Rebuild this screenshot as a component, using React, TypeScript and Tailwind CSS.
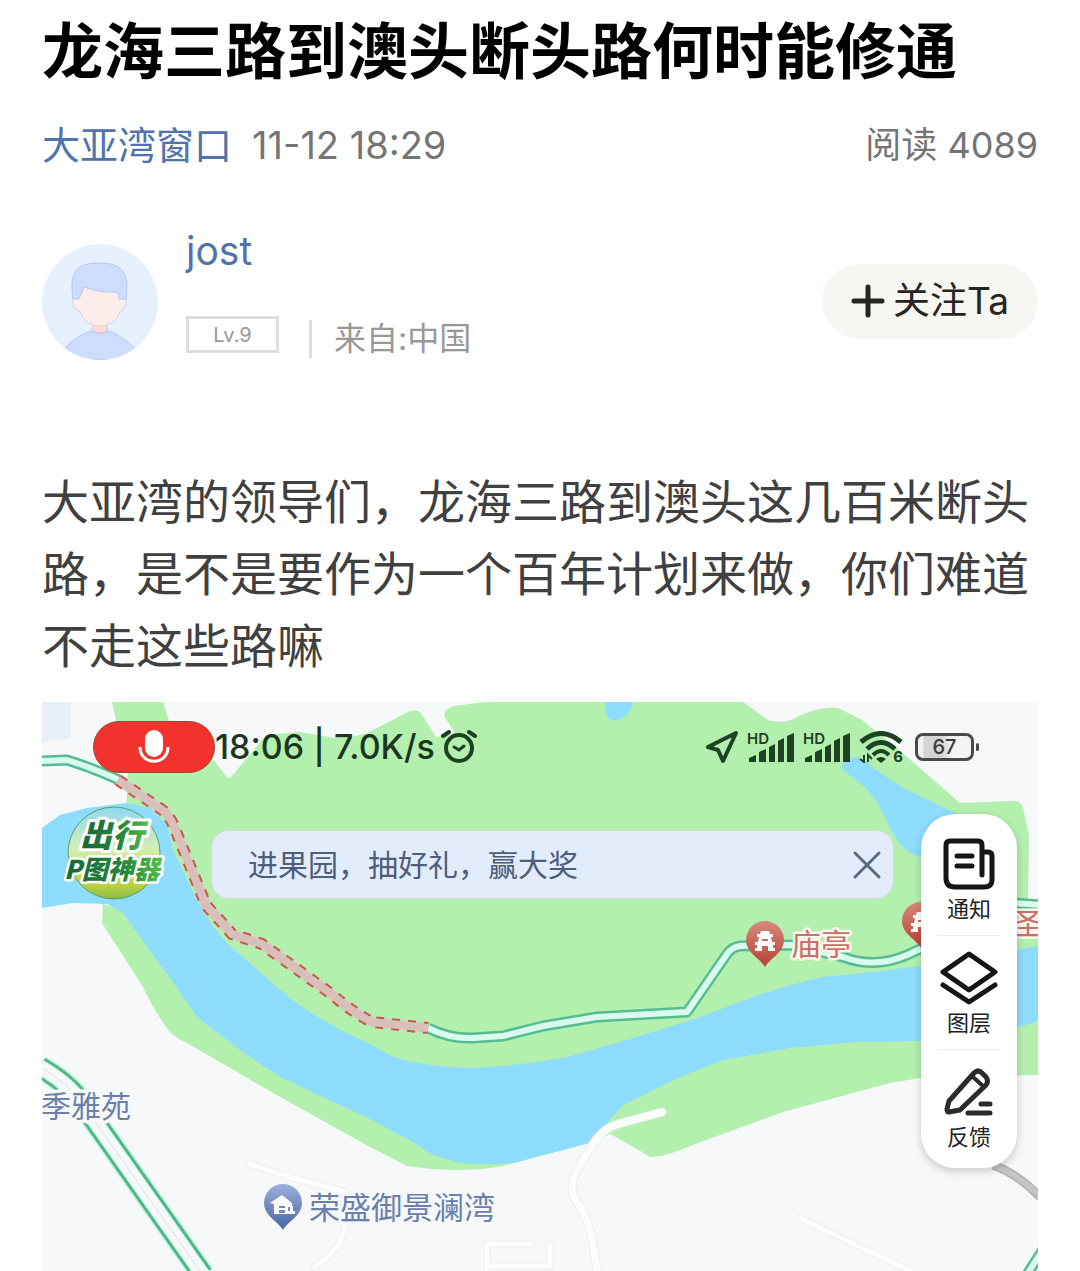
import React from "react";

const WATER =
  "M42 828 L60 815 L87 808 L126 803 L150 808 L167 825 L173 850 L197 900 Q210 925 227 943 L270 981 Q290 999 307 1010 Q340 1031 370 1044 L393 1057 Q430 1068 473 1068 Q520 1066 567 1057 L627 1040 L700 1017 L750 998 Q790 984 823 977 L873 972 L920 966 L1038 946 L1038 1021 Q980 1040 920 1041 L857 1042 L790 1048 L723 1060 L680 1077 L623 1105 L607 1123 L593 1142 L513 1163 Q480 1166 457 1162 L432 1155 L413 1142 L370 1119 L280 1077 L240 1050 L197 1017 L177 988 L123 913 L107 904 L73 903 L42 908 Z";

const UPPER_LAND =
  "M112 702 L163 702 L172 730 L215 762 L227 777 Q229 779 231 777 L258 745 L266 735 L300 732 L335 738 L352 737 L367 733 L408 712 Q416 708 421 713 L436 737 L455 733 L445 718 Q442 710 454 706 L485 702 L743 702 L768 720 Q784 725 799 716 Q820 706 838 708 L862 720 L905 755 L960 803 L1012 801 Q1021 800 1023 808 L1029 835 L1028 900 L1038 903 L1038 960 L920 980 L823 990 L700 1030 L567 1070 L473 1080 L370 1055 L227 960 L165 840 L126 815 L128 773 Z";

const LOWER_LAND =
  "M103 904 L102 923 L143 987 Q160 1022 173 1035 Q180 1040 187 1043 L273 1093 L370 1147 L407 1166 Q460 1174 503 1166 L593 1142 L610 1134 L637 1149 L650 1157 Q665 1157 690 1146 L783 1112 L890 1083 L920 1078 L1038 1075 L1038 1000 L700 1040 L480 1090 L290 1040 L160 920 Z";

const BLOCKED_ROAD =
  "M118 780 L158 807 Q169 813 175 829 L206 905 L232 934 L262 944 L330 993 Q355 1014 372 1022 L428 1028";
const RIVER_ROAD =
  "M428 1028 Q450 1039 473 1038 L503 1036 L543 1026 L597 1017 L687 1012 L727 954 Q732 947 740 946 L790 945 L843 957 Q875 969 907 955 L940 940";

function TrafficRoad({ d, width = 11 }: { d: string; width?: number }) {
  return (
    <g fill="none" strokeLinejoin="round">
      <path d={d} stroke="#55bd93" strokeWidth={width} />
      <path d={d} stroke="#d9fbed" strokeWidth={width - 5} />
    </g>
  );
}

function Lane({ d, width = 7 }: { d: string; width?: number }) {
  return (
    <g fill="none" strokeLinejoin="round" strokeLinecap="round">
      <path d={d} stroke="#eceef0" strokeWidth={width + 2} />
      <path d={d} stroke="#fdfdfe" strokeWidth={width} />
    </g>
  );
}

function Pin({ x, y, fill, children }: { x: number; y: number; fill: string; children: React.ReactNode }) {
  return (
    <g transform={`translate(${x} ${y})`}>
      <path d="M0 23 C-4 15 -19 9 -19 -4 A19 19 0 0 1 19 -4 C19 9 4 15 0 23Z" fill={fill} />
      {children}
    </g>
  );
}

function Pavilion() {
  return (
    <path
      d="M-4 -13 H4 L5 -10 H8 V-7 H-8 V-10 H-5Z M-6 -7 H6 L7 -2 H10 V1 H8 V4 H10 V7 H3 V2 H-3 V7 H-10 V4 H-8 V1 H-10 V-2 H-7Z M-3 -5 V-3 H3 V-5Z"
      fill="#fff"
      fillRule="evenodd"
    />
  );
}

function MapCanvas() {
  return (
    <svg
      className="absolute inset-0 h-full w-full font-['Noto_Sans_CJK_SC',sans-serif]"
      viewBox="42 702 996 569"
      preserveAspectRatio="xMidYMin slice"
      aria-label="地图"
    >
      <defs>
        <linearGradient id="redPin" x1="0" y1="0" x2="0" y2="1">
          <stop offset="0" stopColor="#d58a7c" />
          <stop offset="1" stopColor="#b93f37" />
        </linearGradient>
        <linearGradient id="bluePin" x1="0" y1="0" x2="0" y2="1">
          <stop offset="0" stopColor="#9cb2dc" />
          <stop offset="1" stopColor="#4765a2" />
        </linearGradient>
        <linearGradient id="badgeFill" x1="0" y1="0" x2="0" y2="1">
          <stop offset="0" stopColor="#93d8f0" />
          <stop offset="0.45" stopColor="#d3efb5" />
          <stop offset="0.8" stopColor="#c9d744" />
          <stop offset="1" stopColor="#8dbb45" />
        </linearGradient>
        <linearGradient id="badgeText" x1="0" y1="0" x2="1" y2="0">
          <stop offset="0" stopColor="#17663a" />
          <stop offset="0.6" stopColor="#25863a" />
          <stop offset="1" stopColor="#57c04a" />
        </linearGradient>
      </defs>
      <rect x="42" y="702" width="996" height="569" fill="#f6f8fa" />
      <path d="M42 702 H71 V738 L42 742Z" fill="#e9eff6" />
      <path d={LOWER_LAND} fill="#b3f0ae" />
      <path d={UPPER_LAND} fill="#b3f0ae" />
      <path d={WATER} fill="#8edcfe" />
      <path d="M605 702 L606 714 Q608 721 617 720 Q629 718 633 702Z" fill="#8edcfe" />
      <path d="M850 758 Q840 762 843 770 L866 788 L878 804 L893 833 Q903 852 920 857 L960 870 L960 815 L903 788 L872 767 Q862 755 850 758Z" fill="#8edcfe" />

      <Lane d="M250 1164 L290 1177 L345 1192 L345 1225 Q342 1250 314 1267" width={5} />
      <Lane d="M487 1271 L487 1244 L531 1244 M550 1244 L550 1266 L490 1266" width={5} />
      <Lane d="M800 1218 L860 1247 L911 1271" width={5} />
      <Lane d="M662 1112 L618 1124 Q604 1128 595 1141 L578 1168 Q568 1185 575 1199 Q590 1220 593 1245 L598 1275" width={7} />
      <path d="M993 1165 Q1018 1174 1040 1197" fill="none" stroke="#aeb0b3" strokeWidth="9" />
      <path d="M993 1165 Q1018 1174 1040 1197" fill="none" stroke="#c3c4c6" strokeWidth="6" />

      <g fill="none">
        <path d="M40 1067 Q68 1083 82 1103 L203 1275" stroke="#c3f6db" strokeWidth="24" />
        <path d="M40 1067 Q68 1083 82 1103 L203 1275" stroke="#4fb88b" strokeWidth="21" />
        <path d="M40 1067 Q68 1083 82 1103 L203 1275" stroke="#dcf8ea" strokeWidth="15" />
        <path d="M40 1067 Q68 1083 82 1103 L203 1275" stroke="#f6f9fa" strokeWidth="12" />
        <path d="M40 1067 Q68 1083 82 1103 L203 1275" stroke="#e3dfe3" strokeWidth="1" />
      </g>

      <TrafficRoad d="M40 761 L67 760 Q90 767 119 780" />
      <TrafficRoad d={RIVER_ROAD} />
      <TrafficRoad d="M1000 902 L1040 905" />
      <TrafficRoad d="M1024 1279 L1044 1248" />

      <g fill="none">
        <path d={BLOCKED_ROAD} stroke="#d9c9bd" strokeWidth="10" />
        <path d={BLOCKED_ROAD} stroke="#c8584b" strokeWidth="12" strokeDasharray="8 8" />
        <path d={BLOCKED_ROAD} stroke="#d9bfb9" strokeWidth="8" />
      </g>

      <Pin x={765} y={944} fill="url(#redPin)"><Pavilion /></Pin>
      <Pin x={921} y={925} fill="url(#redPin)"><Pavilion /></Pin>
      <Pin x={283} y={1207} fill="url(#bluePin)">
        <path d="M-13 -4 L-1 -12 L9 -4 V-1 H10 V4 H12 V7 H-9 V-3Z" fill="#fff" />
        <path d="M-4 -1 H2 V1 H-4Z M-4 3 H2 V6 H-4Z M5 0 H7 V4 H5Z" fill="#7189bd" />
      </Pin>

      <g strokeLinejoin="round" fontSize="30" style={{ paintOrder: "stroke" }}>
        <text x="791" y="955" fill="#cb6f68" stroke="#fbf6ee" strokeWidth="5">庙亭</text>
        <text x="1013" y="934" fill="#cb6f68" stroke="#fbf6ee" strokeWidth="5">圣</text>
        <text x="41" y="1117" fill="#6a80ab" stroke="#f6f8fa" strokeWidth="7">季雅苑</text>
        <text x="309" y="1219" fontSize="31" fill="#6a80ab" stroke="#f6f8fa" strokeWidth="5">荣盛御景澜湾</text>
      </g>

      <circle cx="114" cy="853" r="46" fill="url(#badgeFill)" stroke="#58a36c" strokeWidth="1" />
      <g
        fontWeight="900"
        fontStyle="italic"
        fill="url(#badgeText)"
        stroke="#fff"
        strokeLinejoin="round"
        style={{ paintOrder: "stroke" }}
      >
        <text x="80" y="847" fontSize="32" strokeWidth="6">出行</text>
        <text x="64" y="879" fontSize="26" strokeWidth="5">P图神器</text>
      </g>
    </svg>
  );
}

function Avatar() {
  return (
    <svg className="size-[116px] shrink-0 rounded-full" viewBox="0 0 116 116" aria-label="jost">
      <circle cx="58" cy="58" r="58" fill="#e6f0fe" />
      <path d="M20 108 Q30 94 49 87 Q58 92 67 87 Q84 94 96 108 L90 116 H26Z" fill="#cdddfd" stroke="#b4c9ee" strokeWidth="1" />
      <path d="M51 80 H65 V87 Q58 91 51 87Z" fill="#fddcd8" stroke="#dcc6d4" strokeWidth="1" />
      <path d="M31 54 Q29 64 38 68 Q43 82 58 82 Q73 82 78 68 Q86 64 84 54 L78 40 H38Z" fill="#feecea" stroke="#d5d1e6" strokeWidth="1" />
      <path d="M31 55 C27 28 34 19 57 19 C80 19 88 28 84 55 L77 55 L76 48 Q57 49 42 43 L37 55Z" fill="#cdddfd" stroke="#b4c9ee" strokeWidth="1" />
    </svg>
  );
}

function SignalBars() {
  return (
    <span className="relative block h-8 w-12">
      <svg className="absolute inset-0 h-full w-full" viewBox="0 0 48 32" fill="#1d4123" aria-hidden="true">
        <path d="M2 31 V27 L9 24 V31Z M12 31 V21 L19 18 V31Z M22 31 V16 L28 13 V31Z M31 31 V10 L37 7 V31Z M40 31 V5 L47 2 V31Z" />
      </svg>
      <span className="absolute top-0 left-0 text-[15px] leading-[15px] font-semibold">HD</span>
    </span>
  );
}

function StatusBar() {
  return (
    <div className="flex h-[90px] items-center justify-between pr-[59px] pl-[51px] text-[#1d4123]">
      <div className="flex items-center">
        <span className="flex h-[52px] w-[122px] items-center justify-center rounded-full border border-[#9c4a34] bg-[#f2322c]">
          <svg className="size-9" viewBox="0 0 36 36" aria-label="录音中">
            <rect x="9" y="1" width="18" height="27" rx="9" fill="#fff" />
            <path d="M4 18 C4 37 32 37 32 18" fill="none" stroke="#fff" strokeWidth="3" />
          </svg>
        </span>
        <span className="text-[34px] leading-10 font-medium whitespace-pre text-[#1c3520]">18:06 | 7.0K/s</span>
        <svg className="ml-1.5 size-9" viewBox="0 0 36 36" fill="none" stroke="currentColor" strokeWidth="4" strokeLinecap="round" aria-label="闹钟">
          <circle cx="18" cy="19" r="13" />
          <path d="M2 7 L8 3 M28 3 L34 7" />
          <path d="M13 18 L18 21 L23 17" strokeWidth="3" />
        </svg>
      </div>
      <div className="flex items-center gap-2">
        <svg className="size-[34px]" viewBox="0 0 34 34" fill="none" stroke="currentColor" strokeWidth="4" strokeLinejoin="round" aria-label="定位">
          <path d="M31 3 L3 17 L13 20 L18 31Z" />
        </svg>
        <SignalBars />
        <SignalBars />
        <span className="relative block h-8 w-11">
          <svg className="absolute inset-0 h-full w-full" viewBox="0 0 44 32" fill="none" stroke="currentColor" strokeWidth="5" aria-label="Wi-Fi">
            <path d="M2 11 Q22 -6 42 11" />
            <path d="M8 18 Q22 5 36 18" />
            <path d="M14 24 Q22 16 30 24" strokeWidth="4" />
            <path d="M17 28 Q22 24 27 28 L22 32Z" fill="currentColor" stroke="none" />
            <path d="M5 24 V31 L1 28 M9 31 V24 L13 28" strokeWidth="2" />
          </svg>
          <span className="absolute right-0 bottom-0 text-[15px] leading-3 font-bold">6</span>
        </span>
        <span className="ml-1 flex items-center gap-0.5 text-[#3b3b3b]">
          <span className="flex h-7 w-[59px] items-center justify-center rounded-lg border-[3px] border-[#4a4a4a] bg-[linear-gradient(90deg,#f1f3f1_0%,#f1f3f1_8%,#d4d4d4_12%,#d4d4d4_45%,#f4f4f4_65%)] text-[20px] leading-6 font-medium">
            67
          </span>
          <span className="h-2 w-[3px] rounded-sm bg-[#4a4a4a]" />
        </span>
      </div>
    </div>
  );
}

function NoticeIcon() {
  return (
    <svg className="size-[52px]" viewBox="0 0 52 52" fill="none" stroke="#151515" strokeWidth="5" strokeLinecap="round" strokeLinejoin="round" aria-hidden="true">
      <path d="M39 37 V7 Q39 3 35 3 H7 Q3 3 3 7 V40 Q3 49 12 49 H41 Q49 49 49 42 V18 Q49 14 45 14 H41" />
      <path d="M14 18 H29 M14 28 H29" />
    </svg>
  );
}

function LayersIcon() {
  return (
    <svg className="h-[54px] w-[58px]" viewBox="0 0 58 54" fill="none" stroke="#151515" strokeWidth="5" strokeLinecap="round" strokeLinejoin="round" aria-hidden="true">
      <path d="M29 3 L55 21 L29 39 L3 21Z" />
      <path d="M3 34 L29 51 L55 34" />
    </svg>
  );
}

function FeedbackIcon() {
  return (
    <svg className="size-[50px]" viewBox="0 0 50 50" fill="none" stroke="#2b2b2d" strokeWidth="5" strokeLinecap="round" strokeLinejoin="round" aria-hidden="true">
      <path d="M5 34 L30 6 Q34 2 38 6 L42 10 Q45 14 42 18 L16 43 L5 45 Q3 45 3 42Z" />
      <path d="M29 10 L39 19" strokeWidth="4" />
      <path d="M37 37 H46 M24 46 H46" />
    </svg>
  );
}

const TOOLS = [
  { label: "通知", Icon: NoticeIcon },
  { label: "图层", Icon: LayersIcon },
  { label: "反馈", Icon: FeedbackIcon },
];

export default function App() {
  return (
    <main className="w-full bg-white px-[42px] font-['Inter','Noto_Sans_CJK_SC',sans-serif]">
      <h1 className="pt-2.5 text-[61px] leading-[84px] font-semibold text-black">龙海三路到澳头断头路何时能修通</h1>

      <div className="mt-[26px] flex items-center justify-between text-[36px] leading-[50px] text-[#757575]">
        <div className="flex items-center gap-5 text-[38px]">
          <a href="#" className="text-[#4f74ad]">大亚湾窗口</a>
          <span>11-12 18:29</span>
        </div>
        <span>阅读 4089</span>
      </div>

      <section className="mt-[58px] flex items-center">
        <div className="flex flex-1 items-center gap-7">
          <div className="pt-3.5"><Avatar /></div>
          <div className="flex flex-col gap-[42px]">
            <a href="#" className="text-[39px] leading-[46px] text-[#4f74ad]">jost</a>
            <div className="flex items-center text-[#999999]">
              <span className="flex h-[37px] w-[93px] items-center justify-center self-start border-[3px] border-[#dddddd] text-[20px] leading-6">Lv.9</span>
              <span className="ml-[30px] h-[38px] w-[3px] bg-[#dddddd]" />
              <span className="ml-[22px] text-[32px] leading-[46px]">来自:中国</span>
            </div>
          </div>
        </div>
        <button type="button" className="mt-3 flex h-[75px] items-center gap-2 rounded-full bg-[#f7f6f3] px-[29px] text-[37px] leading-[50px] text-[#252521]">
          <svg className="size-[34px]" viewBox="0 0 34 34" stroke="currentColor" strokeWidth="5" strokeLinecap="round" aria-hidden="true">
            <path d="M17 3 V31 M3 17 H31" />
          </svg>
          关注Ta
        </button>
      </section>

      <p className="mt-[104px] text-[47px] leading-[72px] text-[#404040]">
        大亚湾的领导们，龙海三路到澳头这几百米断头路，是不是要作为一个百年计划来做，你们难道不走这些路嘛
      </p>

      <div className="relative mt-5 aspect-[996/569] w-full overflow-hidden">
        <MapCanvas />
        <div className="absolute inset-0">
          <StatusBar />
          <div className="mt-[38px] mr-[144px] ml-[169px] flex h-[69px] items-center justify-between rounded-[18px] border border-[#cfdce8] bg-[#e3ecfa] pr-[10px] pl-9 text-[#4e5d7c]">
            <span className="text-[30px] leading-10">进果园，抽好礼，赢大奖</span>
            <button type="button" aria-label="关闭">
              <svg className="size-8" viewBox="0 0 32 32" stroke="#5d6b80" strokeWidth="3" strokeLinecap="round" aria-hidden="true">
                <path d="M4 4 L28 28 M28 4 L4 28" />
              </svg>
            </button>
          </div>
        </div>
        <div className="absolute top-28 right-[21px] flex w-24 flex-col divide-y divide-[#ececec] rounded-[34px] bg-white px-4 pt-2 pb-1 shadow-[0_3px_8px_rgba(0,0,0,0.2)]">
          {TOOLS.map(({ label, Icon }) => (
            <button key={label} type="button" className="flex h-[114px] flex-col items-center justify-center text-[22px] leading-[30px] text-[#222222]">
              <span className="flex h-[60px] items-center"><Icon /></span>
              {label}
            </button>
          ))}
        </div>
      </div>
    </main>
  );
}
